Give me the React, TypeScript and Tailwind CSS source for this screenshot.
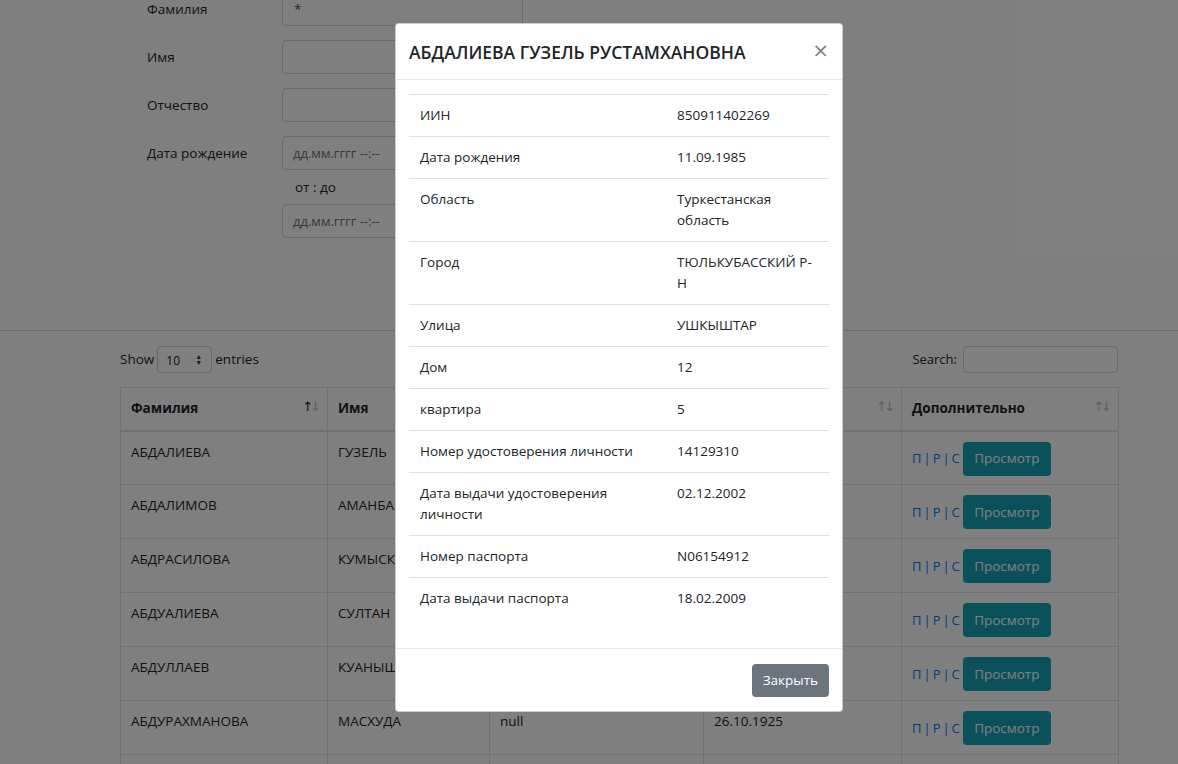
const rows = [
  ["АБДАЛИЕВА", "ГУЗЕЛЬ", "РУСТАМХАНОВНА", "11.09.1985"],
  ["АБДАЛИМОВ", "АМАНБАЙ", "null", "03.04.1952"],
  ["АБДРАСИЛОВА", "КУМЫСКУЛЬ", "null", "17.06.1948"],
  ["АБДУАЛИЕВА", "СУЛТАН", "null", "22.01.1937"],
  ["АБДУЛЛАЕВ", "КУАНЫШ", "null", "09.11.1960"],
  ["АБДУРАХМАНОВА", "МАСХУДА", "null", "26.10.1925"],
  ["АБДУРАХМАНОВ", "ЖАНДОС", "null", "14.05.1971"],
];

const info = [
  ["ИИН", "850911402269"],
  ["Дата рождения", "11.09.1985"],
  ["Область", "Туркестанская область"],
  ["Город", "ТЮЛЬКУБАССКИЙ Р-Н"],
  ["Улица", "УШКЫШТАР"],
  ["Дом", "12"],
  ["квартира", "5"],
  ["Номер удостоверения личности", "14129310"],
  ["Дата выдачи удостоверения личности", "02.12.2002"],
  ["Номер паспорта", "N06154912"],
  ["Дата выдачи паспорта", "18.02.2009"],
];

function SortIcon({ active }: { active?: boolean }) {
  return (
    <span className="absolute right-[9px] top-[10px] text-[13px] leading-[18px] tracking-[-3px] font-normal font-['DejaVu_Sans',sans-serif]">
      <span className={active ? "text-[#212529]" : "text-[#b8bcc0]"}>↑</span>
      <span className="text-[#b8bcc0]">↓</span>
    </span>
  );
}

function Field({ label, value }: { label: string; value?: string }) {
  return (
    <div className="flex items-center mb-[14px]">
      <div className="w-[135px]">{label}</div>
      <div className="w-[241px] h-[34px] border border-[#ced4da] rounded-[4px] px-[11px] flex items-center text-[#495057]">
        {value}
      </div>
    </div>
  );
}

export default function App() {
  return (
    <div className="relative h-[764px] overflow-hidden bg-white text-[#212529] text-[13.5px] leading-[21px] font-['Open_Sans',sans-serif]">
      {/* search form */}
      <div className="h-[331px] border-b border-[#dcdcdc] overflow-hidden">
        <div className="-mt-2 pl-[147px]">
          <Field label="Фамилия" value="*" />
          <Field label="Имя" />
          <Field label="Отчество" />
          <div className="flex">
            <div className="w-[135px] h-[34px] flex items-center">Дата рождение</div>
            <div className="flex flex-col">
              <div className="w-[241px] h-[34px] border border-[#ced4da] rounded-[4px] px-[10px] flex items-center text-[13px] text-[#6c757d]">
                дд.мм.гггг --:--
              </div>
              <div className="pl-[13px] mt-[7px] mb-[6px]">от : до</div>
              <div className="w-[241px] h-[34px] border border-[#ced4da] rounded-[4px] px-[10px] flex items-center text-[13px] text-[#6c757d]">
                дд.мм.гггг --:--
              </div>
            </div>
          </div>
        </div>
      </div>

      {/* results table */}
      <div className="pl-[120px] w-[1118px] pt-[15px]">
        <div className="flex items-center justify-between h-[27px] mb-[14px]">
          <div className="flex items-center gap-[3px]">
            <span>Show</span>
            <div className="w-[55px] h-[27px] border border-[#ced4da] rounded-[4px] flex items-center justify-between pl-[8px] pr-[9px] text-[12px]">
              <span className="pt-[2px]">10</span>
              <span className="text-[7px] leading-[6px] flex flex-col items-center text-[#343a40]">
                <span>▲</span>
                <span>▼</span>
              </span>
            </div>
            <span>entries</span>
          </div>
          <div className="flex items-center gap-[6px]">
            <span className="text-[13px]">Search:</span>
            <div className="w-[155px] h-[27px] border border-[#ced4da] rounded-[4px]" />
          </div>
        </div>
        <table className="w-[998px] border-collapse table-fixed">
          <colgroup>
            <col className="w-[207px]" />
            <col className="w-[162px]" />
            <col className="w-[214px]" />
            <col className="w-[198px]" />
            <col className="w-[217px]" />
          </colgroup>
          <thead>
            <tr>
              {["Фамилия", "Имя", "Отчество", "Дата рождения", "Дополнительно"].map((h, i) => (
                <th
                  key={h}
                  className="relative h-[43px] text-left font-bold border border-[#dee2e6] border-b-2 px-[10px] align-middle"
                >
                  {h}
                  <SortIcon active={i === 0} />
                </th>
              ))}
            </tr>
          </thead>
          <tbody>
            {rows.map((r) => (
              <tr key={r[0]}>
                {r.map((c, i) => (
                  <td key={i} className="h-[54px] border border-[#dee2e6] px-[10px] pt-[10px] align-top">
                    {c}
                  </td>
                ))}
                <td className="h-[54px] border border-[#dee2e6] px-[10px] pt-[10px] align-top">
                  <div className="flex items-center gap-[3px]">
                    <span className="text-[#007bff] text-[13px] flex gap-[2px]">
                      <span>П</span>
                      <span>|</span>
                      <span>Р</span>
                      <span>|</span>
                      <span>С</span>
                    </span>
                    <button className="h-[34px] w-[88px] rounded-[4px] bg-[#17a2b8] text-white">Просмотр</button>
                  </div>
                </td>
              </tr>
            ))}
          </tbody>
        </table>
      </div>

      {/* modal backdrop */}
      <div className="absolute inset-0 bg-black/50" />

      {/* modal */}
      <div className="absolute left-[395px] top-[23px] w-[448px] bg-white border border-black/20 rounded-[4px]">
        <div className="h-[56px] border-b border-[#e9ecef] flex items-center justify-between pl-[13px] pr-[14px]">
          <h5 className="text-[17.5px] font-semibold leading-[26px]">АБДАЛИЕВА ГУЗЕЛЬ РУСТАМХАНОВНА</h5>
          <span className="text-[26px] font-normal text-black/50 leading-none pb-[4px]">×</span>
        </div>
        <div className="px-[13px] pt-[14px] pb-[29px]">
          <table className="w-full border-collapse table-fixed">
            <colgroup>
              <col className="w-[257px]" />
              <col />
            </colgroup>
            <tbody>
              {info.map(([k, v]) => (
                <tr key={k}>
                  <td className="border-t border-[#dee2e6] px-[11px] py-[10px] align-top">{k}</td>
                  <td className="border-t border-[#dee2e6] px-[11px] py-[10px] align-top">{v}</td>
                </tr>
              ))}
            </tbody>
          </table>
        </div>
        <div className="border-t border-[#e9ecef] pt-[15px] pb-[14px] pr-[13px] flex justify-end">
          <button className="h-[33px] px-[11px] rounded-[4px] bg-[#6c757d] text-white">Закрыть</button>
        </div>
      </div>
    </div>
  );
}
